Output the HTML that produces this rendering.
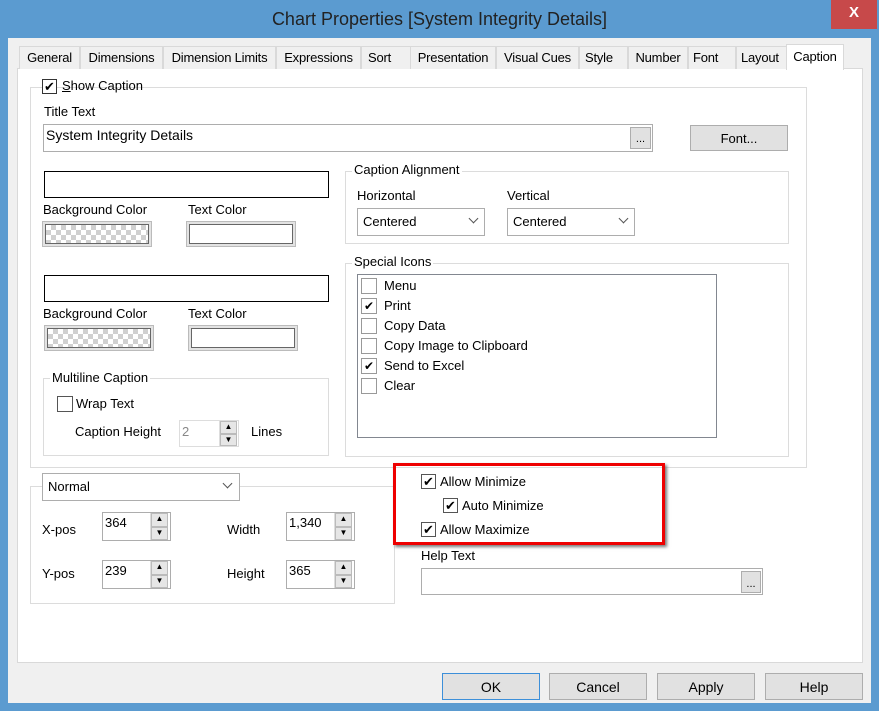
<!DOCTYPE html>
<html><head><style>
*{margin:0;padding:0;box-sizing:border-box}
body{width:879px;height:711px;background:#5b9bd0;font-family:"Liberation Sans",sans-serif;font-size:13px;color:#000;position:relative;overflow:hidden}
.a{position:absolute}
.t{position:absolute;white-space:nowrap;line-height:16px}
.box{position:absolute;border:1px solid #adadad;background:#fff}
.grp{position:absolute;border:1px solid #dcdcdc}
.lg{position:absolute;background:#fff;padding:0 2px;white-space:nowrap;line-height:16px}
.cb{position:absolute;width:15px;height:15px;border:1px solid #333;background:#fff;font-size:13px;line-height:13px;text-align:center}
.cb2{position:absolute;width:16px;height:16px;border:1px solid #999;background:#fff;font-size:12px;line-height:14px;text-align:center}
.tab{position:absolute;top:46px;height:23px;background:#f0f0f0;border:1px solid #d9d9d9;border-bottom:none;text-align:center;line-height:22px;font-size:13px;letter-spacing:-0.2px}
.btn{position:absolute;background:#e1e1e1;border:1px solid #adadad;text-align:center;font-size:14px}
.chk{background:repeating-conic-gradient(#d0d0d0 0 25%,#fff 0 50%) 0 0/10px 10px}
.sp{position:absolute;width:18px;border-left:1px solid #ddd}
.sp div{height:50%;background:#e6e6e6;border:1px solid #bbb;font-size:8px;text-align:center;line-height:9px}
.arr{position:absolute;width:7px;height:7px;border-right:1.5px solid #555;border-bottom:1.5px solid #555;transform:rotate(45deg)}
</style></head><body>
<div class="t" style="left:0;width:879px;top:9px;text-align:center;font-size:18px;line-height:20px;color:#222">Chart Properties [System Integrity Details]</div>
<div class="a" style="left:831px;top:0;width:46px;height:29px;background:#c7494a;color:#fff;font-size:15px;font-weight:bold;text-align:center;line-height:26px">X</div>
<div class="a" style="left:8px;top:38px;width:863px;height:665px;background:#f0f0f0"></div>
<div class="a" style="left:17px;top:68px;width:846px;height:595px;background:#fff;border:1px solid #d9d9d9"></div>
<div class="tab" style="left:19px;width:61px">General</div>
<div class="tab" style="left:80px;width:83px">Dimensions</div>
<div class="tab" style="left:163px;width:113px">Dimension Limits</div>
<div class="tab" style="left:276px;width:85px">Expressions</div>
<div class="tab" style="left:361px;width:50px;text-align:left;padding-left:6px">Sort</div>
<div class="tab" style="left:410px;width:86px">Presentation</div>
<div class="tab" style="left:496px;width:83px">Visual Cues</div>
<div class="tab" style="left:579px;width:49px;text-align:left;padding-left:5px">Style</div>
<div class="tab" style="left:628px;width:60px">Number</div>
<div class="tab" style="left:688px;width:48px;text-align:left;padding-left:4px">Font</div>
<div class="tab" style="left:736px;width:51px;text-align:left;padding-left:4px">Layout</div>
<div class="tab" style="left:786px;top:44px;width:58px;height:26px;background:#fff;line-height:24px">Caption</div>

<div class="grp" style="left:30px;top:87px;width:777px;height:381px"></div>
<div class="lg" style="left:40px;top:78px;width:110px"></div>
<div class="cb" style="left:42px;top:79px">✔</div>
<div class="t" style="left:62px;top:78px"><u>S</u>how Caption</div>
<div class="t" style="left:44px;top:104px">Title Text</div>
<div class="box" style="left:43px;top:124px;width:610px;height:28px"></div>
<div class="t" style="left:46px;top:127px;font-size:14px">System Integrity Details</div>
<div class="btn" style="left:630px;top:127px;width:21px;height:22px;font-size:11px;line-height:22px">...</div>
<div class="btn" style="left:690px;top:125px;width:98px;height:26px;line-height:26px;font-size:13px">Font...</div>

<div class="box" style="left:44px;top:171px;width:285px;height:27px;border-color:#000"></div>
<div class="t" style="left:43px;top:202px">Background Color</div>
<div class="t" style="left:188px;top:202px">Text Color</div>
<div class="a" style="left:42px;top:221px;width:110px;height:26px;border:1px solid #bbb;background:#e3e3e3;padding:2px"><div class="chk" style="width:100%;height:100%;border:1px solid #666"></div></div>
<div class="a" style="left:186px;top:221px;width:110px;height:26px;border:1px solid #bbb;background:#e3e3e3;padding:2px"><div style="width:100%;height:100%;border:1px solid #666;background:#fff"></div></div>
<div class="box" style="left:44px;top:275px;width:285px;height:27px;border-color:#000"></div>
<div class="t" style="left:43px;top:306px">Background Color</div>
<div class="t" style="left:188px;top:306px">Text Color</div>
<div class="a" style="left:44px;top:325px;width:110px;height:26px;border:1px solid #bbb;background:#e3e3e3;padding:2px"><div class="chk" style="width:100%;height:100%;border:1px solid #666"></div></div>
<div class="a" style="left:188px;top:325px;width:110px;height:26px;border:1px solid #bbb;background:#e3e3e3;padding:2px"><div style="width:100%;height:100%;border:1px solid #666;background:#fff"></div></div>

<div class="grp" style="left:43px;top:378px;width:286px;height:78px"></div>
<div class="lg" style="left:50px;top:370px">Multiline Caption</div>
<div class="cb2" style="left:57px;top:396px;border-color:#555"></div>
<div class="t" style="left:76px;top:396px">Wrap Text</div>
<div class="t" style="left:75px;top:424px">Caption Height</div>
<div class="a" style="left:179px;top:420px;width:60px;height:27px;border:1px solid #ddd"></div>
<div class="t" style="left:182px;top:424px;color:#888">2</div>
<div class="sp" style="left:219px;top:421px;height:25px"><div>▲</div><div>▼</div></div>
<div class="t" style="left:251px;top:424px">Lines</div>

<div class="grp" style="left:345px;top:171px;width:444px;height:73px"></div>
<div class="lg" style="left:352px;top:162px">Caption Alignment</div>
<div class="t" style="left:357px;top:188px">Horizontal</div>
<div class="t" style="left:507px;top:188px">Vertical</div>
<div class="box" style="left:357px;top:208px;width:128px;height:28px"></div>
<div class="t" style="left:363px;top:214px">Centered</div>
<div class="arr" style="left:470px;top:215px"></div>
<div class="box" style="left:507px;top:208px;width:128px;height:28px"></div>
<div class="t" style="left:513px;top:214px">Centered</div>
<div class="arr" style="left:620px;top:215px"></div>

<div class="grp" style="left:345px;top:263px;width:444px;height:194px"></div>
<div class="lg" style="left:352px;top:254px">Special Icons</div>
<div class="box" style="left:357px;top:274px;width:360px;height:164px;border-color:#828790"></div>
<div class="cb2" style="left:361px;top:278px"></div><div class="t" style="left:384px;top:278px">Menu</div>
<div class="cb2" style="left:361px;top:298px">✔</div><div class="t" style="left:384px;top:298px">Print</div>
<div class="cb2" style="left:361px;top:318px"></div><div class="t" style="left:384px;top:318px">Copy Data</div>
<div class="cb2" style="left:361px;top:338px"></div><div class="t" style="left:384px;top:338px">Copy Image to Clipboard</div>
<div class="cb2" style="left:361px;top:358px">✔</div><div class="t" style="left:384px;top:358px">Send to Excel</div>
<div class="cb2" style="left:361px;top:378px"></div><div class="t" style="left:384px;top:378px">Clear</div>

<div class="grp" style="left:30px;top:486px;width:365px;height:118px"></div>
<div class="box" style="left:42px;top:473px;width:198px;height:28px"></div>
<div class="t" style="left:48px;top:479px">Normal</div>
<div class="arr" style="left:224px;top:480px"></div>
<div class="t" style="left:42px;top:522px">X-pos</div>
<div class="t" style="left:42px;top:566px">Y-pos</div>
<div class="t" style="left:227px;top:522px">Width</div>
<div class="t" style="left:227px;top:566px">Height</div>
<div class="box" style="left:102px;top:512px;width:69px;height:29px"></div><div class="t" style="left:105px;top:515px">364</div><div class="sp" style="left:150px;top:513px;height:27px"><div>▲</div><div>▼</div></div>
<div class="box" style="left:102px;top:560px;width:69px;height:29px"></div><div class="t" style="left:105px;top:563px">239</div><div class="sp" style="left:150px;top:561px;height:27px"><div>▲</div><div>▼</div></div>
<div class="box" style="left:286px;top:512px;width:69px;height:29px"></div><div class="t" style="left:289px;top:515px">1,340</div><div class="sp" style="left:334px;top:513px;height:27px"><div>▲</div><div>▼</div></div>
<div class="box" style="left:286px;top:560px;width:69px;height:29px"></div><div class="t" style="left:289px;top:563px">365</div><div class="sp" style="left:334px;top:561px;height:27px"><div>▲</div><div>▼</div></div>

<div class="a" style="left:393px;top:463px;width:272px;height:82px;border:3px solid #e00;box-shadow:2px 2px 3px #777"></div>
<div class="cb" style="left:421px;top:474px;border-color:#555">✔</div><div class="t" style="left:440px;top:474px">Allow Minimize</div>
<div class="cb" style="left:443px;top:498px;border-color:#555">✔</div><div class="t" style="left:462px;top:498px">Auto Minimize</div>
<div class="cb" style="left:421px;top:522px;border-color:#555">✔</div><div class="t" style="left:440px;top:522px">Allow Maximize</div>
<div class="t" style="left:421px;top:548px">Help Text</div>
<div class="box" style="left:421px;top:568px;width:342px;height:27px"></div>
<div class="btn" style="left:741px;top:571px;width:20px;height:22px;font-size:11px;line-height:24px">...</div>

<div class="btn" style="left:442px;top:673px;width:98px;height:27px;line-height:26px;border-color:#3c8fd9">OK</div>
<div class="btn" style="left:549px;top:673px;width:98px;height:27px;line-height:26px">Cancel</div>
<div class="btn" style="left:657px;top:673px;width:98px;height:27px;line-height:26px">Apply</div>
<div class="btn" style="left:765px;top:673px;width:98px;height:27px;line-height:26px">Help</div>
</body></html>
